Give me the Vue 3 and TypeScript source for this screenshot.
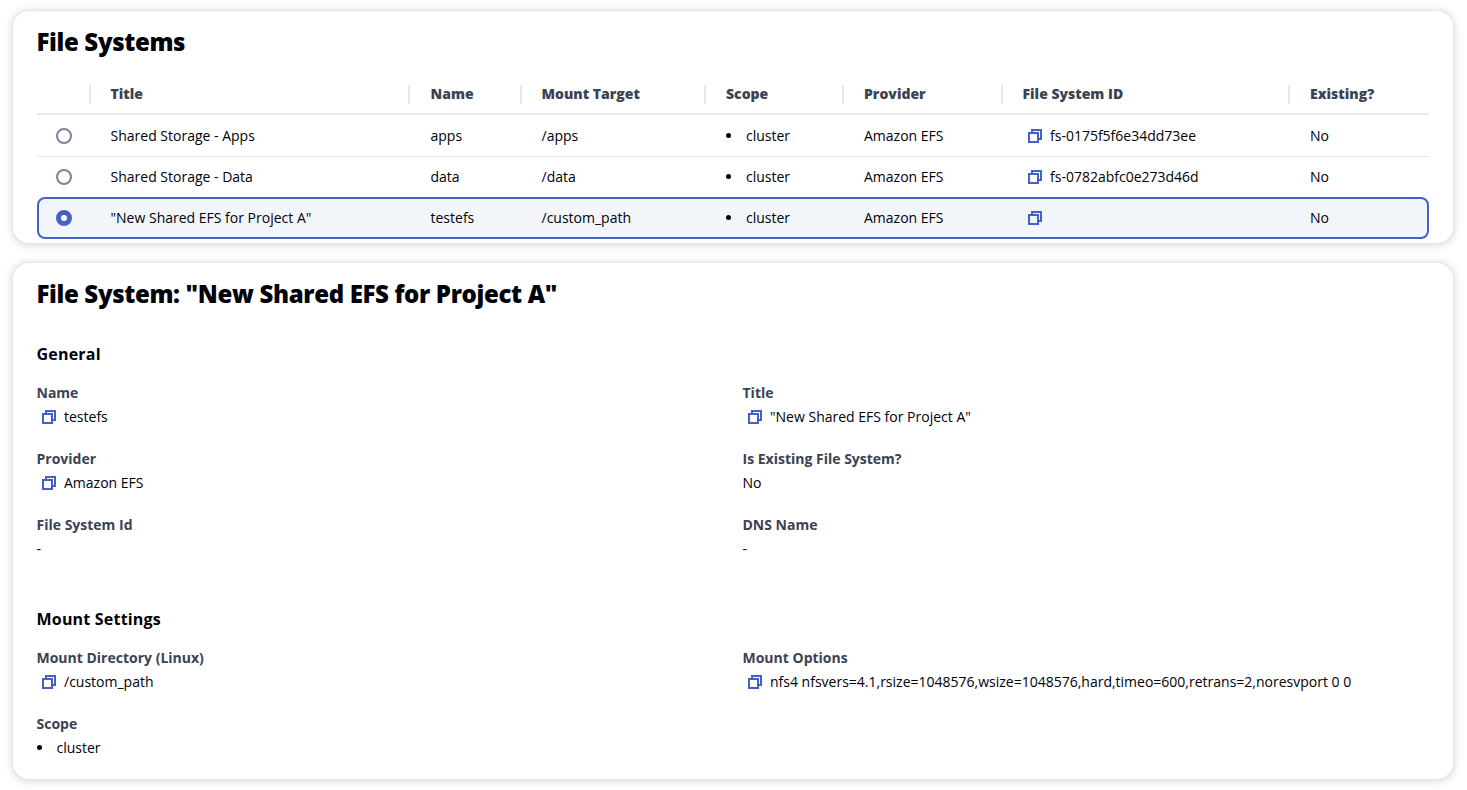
<script setup lang="ts">
import { computed, h, ref } from 'vue'

interface FileSystem {
  title: string
  name: string
  target: string
  provider: string
  id: string
}

const columns = ['Title', 'Name', 'Mount Target', 'Scope', 'Provider', 'File System ID', 'Existing?']

const fileSystems: FileSystem[] = [
  { title: 'Shared Storage - Apps', name: 'apps', target: '/apps', provider: 'Amazon EFS', id: 'fs-0175f5f6e34dd73ee' },
  { title: 'Shared Storage - Data', name: 'data', target: '/data', provider: 'Amazon EFS', id: 'fs-0782abfc0e273d46d' },
  { title: '"New Shared EFS for Project A"', name: 'testefs', target: '/custom_path', provider: 'Amazon EFS', id: '' },
]

const selected = ref(2)
const current = computed(() => fileSystems[selected.value])

interface Field {
  label: string
  value: string
  kind?: 'copy' | 'list'
}

const sections = computed<{ heading: string; fields: Field[] }[]>(() => [
  {
    heading: 'General',
    fields: [
      { label: 'Name', value: current.value.name, kind: 'copy' },
      { label: 'Title', value: current.value.title, kind: 'copy' },
      { label: 'Provider', value: current.value.provider, kind: 'copy' },
      { label: 'Is Existing File System?', value: 'No' },
      { label: 'File System Id', value: current.value.id || '-', kind: current.value.id ? 'copy' : undefined },
      { label: 'DNS Name', value: '-' },
    ],
  },
  {
    heading: 'Mount Settings',
    fields: [
      { label: 'Mount Directory (Linux)', value: current.value.target, kind: 'copy' },
      { label: 'Mount Options', value: 'nfs4 nfsvers=4.1,rsize=1048576,wsize=1048576,hard,timeo=600,retrans=2,noresvport 0 0', kind: 'copy' },
      { label: 'Scope', value: 'cluster', kind: 'list' },
    ],
  },
])

const CopyIcon = () =>
  h('svg', { width: 16, height: 16, viewBox: '0 0 16 16', fill: 'none', stroke: '#4361c6', 'stroke-width': 2 }, [
    h('path', { d: 'M2 5h9v9H2z' }),
    h('path', { d: 'M5 5V2h9v9h-3' }),
  ])
</script>

<template>
  <main class="page">
    <section class="card list-card">
      <h2 class="title">File Systems</h2>
      <div class="table">
        <div class="row head">
          <div class="cell radio-cell"></div>
          <div v-for="c in columns" :key="c" class="cell"><span class="column-name">{{ c }}</span></div>
        </div>
        <div
          v-for="(fs, i) in fileSystems"
          :key="fs.name"
          class="row body"
          :class="{ selected: i === selected }"
          @click="selected = i"
        >
          <div class="cell radio-cell"><span class="radio"></span></div>
          <div class="cell">{{ fs.title }}</div>
          <div class="cell">{{ fs.name }}</div>
          <div class="cell">{{ fs.target }}</div>
          <div class="cell"><span class="bullet"></span>cluster</div>
          <div class="cell">{{ fs.provider }}</div>
          <div class="cell id-cell"><CopyIcon class="copy" />{{ fs.id }}</div>
          <div class="cell">No</div>
        </div>
      </div>
    </section>

    <section class="card detail-card">
      <h2 class="title">File System: {{ current.title }}</h2>
      <div v-for="s in sections" :key="s.heading" class="section">
        <h3 class="heading">{{ s.heading }}</h3>
        <div class="fields">
          <div v-for="f in s.fields" :key="f.label" class="field">
            <div class="label">{{ f.label }}</div>
            <div class="value">
              <CopyIcon v-if="f.kind === 'copy'" class="copy" />
              <span v-if="f.kind === 'list'" class="bullet"></span>
              <span>{{ f.value }}</span>
            </div>
          </div>
        </div>
      </div>
    </section>
  </main>
</template>

<style>
body {
  background: #fff;
}
</style>

<style scoped>
.page {
  box-sizing: border-box;
  height: 790px;
  overflow: hidden;
  padding: 11px 14px 0 13px;
  display: flex;
  flex-direction: column;
  gap: 20px;
  font: 14px/20px "Open Sans", "Noto Sans", sans-serif;
  color: #000008;
}
.card {
  box-sizing: border-box;
  background: #fff;
  border-radius: 16px;
  box-shadow: 0 0 1px 0.5px #e6e6e6, 0 1px 9px 2px rgba(0, 0, 0, 0.13);
  padding: 16px 24px 0;
}
.list-card {
  height: 232px;
}
.detail-card {
  height: 516px;
}
.title {
  margin: 0 0 0 -0.5px;
  font-size: 24px;
  line-height: 30px;
  font-weight: 800;
  letter-spacing: -0.34px;
}
.table {
  margin-top: 16px;
}
.row {
  box-sizing: border-box;
  display: grid;
  grid-template-columns: 54px 319px 112px 184px 138px 159px 287px 1fr;
}
.cell {
  display: flex;
  align-items: center;
  padding-left: 19.5px;
  white-space: nowrap;
}
.cell:nth-child(3) {
  padding-left: 20.5px;
}
.cell:nth-child(5),
.cell:nth-child(6),
.cell:nth-child(8) {
  padding-left: 20px;
}
.head {
  height: 42px;
  padding: 12px 0 9px;
  border-bottom: 2px solid #e7e8e9;
  color: #3b4253;
  font-weight: 800;
}
.head .cell {
  height: 19px;
  border-right: 2px solid #e7e8e9;
  box-sizing: border-box;
}
.head .cell:last-child {
  border-right: 0;
}
.column-name {
  padding-bottom: 2px;
}
.body {
  height: 42px;
  border-bottom: 1px solid #e7e8e9;
}
.body:nth-child(3) {
  height: 40px;
  border-bottom: 0;
}
.body.selected {
  border: 2px solid #4361c6;
  border-radius: 8px;
  background: #f2f6fb;
  grid-template-columns: 52px 319px 112px 184px 138px 159px 287px 1fr;
}
.radio-cell {
  padding-left: 19px;
}
.selected .radio-cell {
  padding-left: 17px;
}
.id-cell {
  padding-left: 19px;
}
.radio {
  box-sizing: border-box;
  width: 16px;
  height: 16px;
  border: 2px solid #7c8496;
  border-radius: 50%;
}
.selected .radio {
  border: 5px solid #4361c6;
  background: #fff;
}
.bullet {
  width: 5px;
  height: 5px;
  border-radius: 50%;
  background: #000008;
  margin: 0 14.5px 1px 0.5px;
}
.cell .bullet {
  margin-left: 0;
  margin-right: 15px;
}
.copy {
  flex: none;
  margin: 0 7px 0 5px;
}
.section {
  margin-top: 35px;
}
.section + .section {
  margin-top: 50px;
}
.heading {
  margin: 0 0 0 -0.5px;
  font-size: 16px;
  line-height: 20px;
  font-weight: 700;
  letter-spacing: 0.2px;
}
.fields {
  margin: 19px 0 0 -0.5px;
  display: grid;
  grid-template-columns: 706px 1fr;
  row-gap: 22px;
}
.label {
  color: #3b4253;
  font-weight: 700;
}
.value {
  display: flex;
  align-items: center;
  height: 20px;
  margin-top: 4px;
  white-space: nowrap;
}
.field .copy {
  margin: 0 7px 0 4.5px;
}
</style>
